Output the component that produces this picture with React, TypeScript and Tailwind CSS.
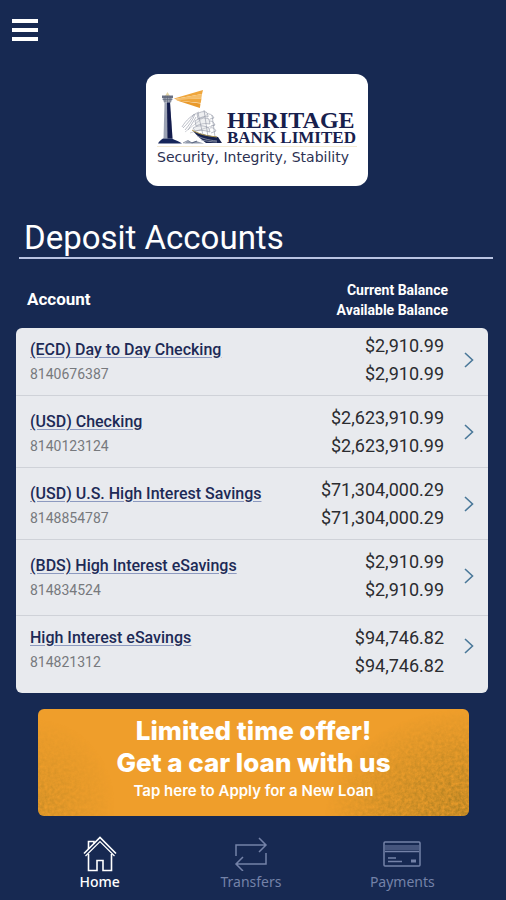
import React from "react";

type Account = {
  name: string;
  number: string;
  current: string;
  available: string;
};

const accounts: Account[] = [
  { name: "(ECD) Day to Day Checking", number: "8140676387", current: "$2,910.99", available: "$2,910.99" },
  { name: "(USD) Checking", number: "8140123124", current: "$2,623,910.99", available: "$2,623,910.99" },
  { name: "(USD) U.S. High Interest Savings", number: "8148854787", current: "$71,304,000.29", available: "$71,304,000.29" },
  { name: "(BDS) High Interest eSavings", number: "814834524", current: "$2,910.99", available: "$2,910.99" },
  { name: "High Interest eSavings", number: "814821312", current: "$94,746.82", available: "$94,746.82" },
];

const LogoMark = () => (
  <svg width="66" height="56" viewBox="0 0 66 56" fill="none" aria-hidden="true">
    {/* Light beams */}
    <path d="M17 8.500 46 0l-1 4-27 5z" fill="#efa63c" />
    <path d="m18 9 27-5-.6 4.500L19 9.600z" fill="#f5bd68" />
    <path d="m19 9.500 25.500-1-.8 4.500L20 10.500z" fill="#efa63c" />
    <path d="m20 10.500 23.500 3-.6 4.500z" fill="#e99a2c" />
    {/* Lighthouse */}
    <path d="m8 6 2.500-4L13 6z" fill="#e3d5a8" />
    <path d="M5 5.500h11V8H5z" fill="#6a7184" />
    <path d="M5.500 8h10l-1.500 4.500H7z" fill="#9aa0ae" />
    <path d="M5.500 9.500h10M8 6v6.500m2.500-6.500v6.500M13 6v6.500" stroke="#5b6377" strokeWidth=".6" />
    <path d="M7.500 12.500H13l2.500 36H6.500z" fill="#9ba2b4" />
    <path d="M10 12.500h3l2.500 36h-5z" fill="#131c4c" />
    <path d="M1 53.500c1-2.500 3-3.500 5-5h9c3 1.500 7 3 10 5z" fill="#17265a" />
    {/* Ship sails */}
    <g stroke="#8f94a2" strokeWidth=".6">
      <path d="M25 37c4-7 10-12 17-15M26 38c5-5 9-10 11-14M28 40c4-5 8-10 10-16M31 40c3-5 6-9 8-13" />
      <path d="M40 24c3-2 6-3 9-2 2 1 2 3 2 5-3-1-7 0-10 2zM38 31c4-3 9-4 14-2l1 5c-5-1-10 0-14 2zM36 38c5-3 11-3 16 0l1 4c-6-2-11-2-15-1z" fill="#eeeff1" />
      <path d="M52 24c2 0 4 2 5 4l-4 1M53 31c3 0 4 2 5 4l-4 1M53 38c3-1 5 1 6 3l-5 2M47 20l4 27M41 23l5 22M55 25l3 22" />
      <path d="M28 42l24-19M33 43l25-8" strokeWidth=".4" />
    </g>
    {/* Hull and water */}
    <path d="M36 41c7 3 17 5 25 6l4 6H49c-4-3-9-7-13-12z" fill="#17234e" />
    <path d="M35 40c8 5 17 6 25 7" stroke="#b29a52" strokeWidth="1" />
    <path d="M40 46c5 2 10 4 20 5M44 50c6 1 10 2 16 2" stroke="#a9afbd" strokeWidth=".7" />
    <path d="M27 53.500l4-2.500 3 1.500 5-1.500 8 2.500z" fill="#8e97a9" />
    <path d="M26 53l5-2.500 4 2.500 5-2" stroke="#34415f" strokeWidth=".6" />
  </svg>
);

const HomeIcon = () => (
  <svg width="34" height="36" viewBox="0 0 34 36" fill="none" stroke="currentColor" strokeWidth="1.6" aria-hidden="true">
    <path d="M1 17.500 17 1.500l16 16" />
    <path d="M2.500 20 17 5.500 31.500 20" strokeWidth="1.200" />
    <path d="M5.500 13V5.500H11V8" />
    <path d="M5.500 18v16.500H14V24.500h6v10h8.500V18" />
  </svg>
);

const TransfersIcon = () => (
  <svg width="34" height="34" viewBox="0 0 34 34" fill="none" stroke="currentColor" strokeWidth="1.500" aria-hidden="true">
    <path d="M2 19V8h30M25 1l7 7-7 7" />
    <path d="M32 16v11H2M9 20l-7 7 7 7" />
  </svg>
);

const PaymentsIcon = () => (
  <svg width="38" height="26" viewBox="0 0 38 26" fill="none" stroke="currentColor" strokeWidth="1.500" aria-hidden="true">
    <rect x="1" y="1" width="36" height="24" rx="1" />
    <path d="M2 4h34v5H2z" fill="currentColor" fillOpacity=".5" stroke="none" />
    <path d="M2 10.500h34" />
    <path d="M5 17h8M5 20.500h14" />
    <path d="M28 18.500h5v3h-5z" fill="currentColor" stroke="none" />
  </svg>
);

const ChevronIcon = () => (
  <svg width="10" height="16" viewBox="0 0 10 16" fill="none" stroke="#4a7899" strokeWidth="1.6" aria-hidden="true">
    <path d="m1 1 7.500 7L1 15" />
  </svg>
);

// Worn-paper speckle at the two ends of the promo banner
const BannerTexture = () => (
  <>
    <svg className="absolute top-0 right-0 h-full w-36" aria-hidden="true">
      <defs>
        <filter id="speckle" x="0" y="0" width="100%" height="100%" colorInterpolationFilters="sRGB">
          <feTurbulence type="fractalNoise" baseFrequency="0.3" numOctaves="4" seed="4" result="noise" />
          <feColorMatrix in="noise" type="matrix" values="0 0 0 0 0.6  0 0 0 0 0.46  0 0 0 0 0.12  1.3 0 0 0 -0.12" result="spots" />
          <feComposite in="spots" in2="SourceGraphic" operator="in" />
        </filter>
        <radialGradient id="right-fade" cx="1" cy="1" r="1">
          <stop offset="0" stopColor="#fff" stopOpacity=".85" />
          <stop offset=".6" stopColor="#fff" stopOpacity=".45" />
          <stop offset="1" stopColor="#fff" stopOpacity="0" />
        </radialGradient>
      </defs>
      <rect width="100%" height="100%" fill="url(#right-fade)" filter="url(#speckle)" />
    </svg>
    <svg className="absolute top-0 left-0 h-full w-24" aria-hidden="true">
      <defs>
        <radialGradient id="left-fade" cx="0" cy="0.9" r="0.8">
          <stop offset="0" stopColor="#fff" stopOpacity=".45" />
          <stop offset="1" stopColor="#fff" stopOpacity="0" />
        </radialGradient>
      </defs>
      <rect width="100%" height="100%" fill="url(#left-fade)" filter="url(#speckle)" />
    </svg>
  </>
);

const navItems = [
  { label: "Home", icon: HomeIcon, active: true },
  { label: "Transfers", icon: TransfersIcon, active: false },
  { label: "Payments", icon: PaymentsIcon, active: false },
];

const App = () => {
  return (
    <div className="min-h-screen bg-[#172952] font-['Roboto',sans-serif] text-white">
      <header className="px-3 pt-4">
        <button type="button" aria-label="Menu" className="flex h-7 w-[26px] flex-col justify-center gap-[5px]">
          <span className="h-1 w-full bg-white" />
          <span className="h-1 w-full bg-white" />
          <span className="h-1 w-full bg-white" />
        </button>
      </header>

      <div className="flex justify-center pt-[30px] pl-2">
        <div className="h-28 w-[222px] rounded-xl bg-white px-[11px] pt-4 text-[#17204d]">
          <div className="flex items-end border-b border-[#f3ead3]">
            <LogoMark />
            <div className="pl-1 font-['Liberation_Serif',serif] font-bold whitespace-nowrap">
              <div className="text-[24px] leading-[18px]">HERITAGE</div>
              <div className="text-[17px] leading-[17px]">BANK LIMITED</div>
            </div>
          </div>
          <p className="font-['DejaVu_Sans',sans-serif] text-[14px] leading-5 whitespace-nowrap text-[#2c3152]">
            Security, Integrity, Stability
          </p>
        </div>
      </div>

      <main>
        <h1 className="mr-[13px] ml-[19px] mt-8 border-b-2 border-[#b9c3e2] pl-[5px] text-[33px] leading-[39px]">
          Deposit Accounts
        </h1>

        <div className="mr-[18px] ml-4 pt-[21px]">
          <table className="w-full border-separate border-spacing-0">
            <thead>
              <tr>
                <th scope="col" className="pb-2 pl-[11px] text-left text-[17px] font-bold">
                  Account
                </th>
                <th scope="col" colSpan={2} className="pr-10 pb-2 text-right text-[14px] leading-5 font-bold">
                  Current Balance
                  <br />
                  Available Balance
                </th>
              </tr>
            </thead>
            <tbody>
              {accounts.map((account, i) => {
                const isFirst = i === 0;
                const isLast = i === accounts.length - 1;
                const spacing = isFirst
                  ? "pt-1 pb-[7px]"
                  : isLast
                    ? "pt-2 pb-[13px]"
                    : i === accounts.length - 2
                      ? "pt-2 pb-[11px]"
                      : "pt-2 pb-[7px]";
                const cell = `bg-[#e8eaee] align-top ${spacing} ${isLast ? "" : "border-b border-[#cfd2d8]"}`;

                return (
                  <tr key={account.number}>
                    <td className={`${cell} pl-[14px] ${isFirst ? "rounded-tl-md" : ""} ${isLast ? "rounded-bl-md" : ""}`}>
                      <div className={isLast ? "pt-0.5" : "pt-1.5"}>
                        <a href="#" className="block text-[16px] leading-6 font-medium whitespace-nowrap text-[#1d2a56] underline decoration-[#8d9ac0] underline-offset-2">
                          {account.name}
                        </a>
                        <div className="text-[14px] leading-6 text-[#77797d]">{account.number}</div>
                      </div>
                    </td>
                    <td className={`${cell} text-right text-[18px] leading-7 text-[#2b2c30]`}>
                      <div>{account.current}</div>
                      <div>{account.available}</div>
                    </td>
                    <td className={`${cell} w-11 ${isFirst ? "rounded-tr-md" : ""} ${isLast ? "rounded-br-md" : ""}`}>
                      <a
                        href="#"
                        aria-label={`Open ${account.name}`}
                        className={`flex items-center pl-5 ${isLast ? "h-11" : "h-14"}`}
                      >
                        <ChevronIcon />
                      </a>
                    </td>
                  </tr>
                );
              })}
            </tbody>
          </table>
        </div>

        <div className="mr-[37px] ml-[38px] pt-4">
          <button
            type="button"
            className="relative block w-full overflow-hidden rounded-md bg-[#ef9e2b] pt-1.5 pb-[13px] text-center font-['Inter',sans-serif]"
          >
            <BannerTexture />
            <span className="relative block text-[26px] leading-8 font-extrabold">Limited time offer!</span>
            <span className="relative block text-[26px] leading-8 font-extrabold">Get a car loan with us</span>
            <span className="relative block text-[15px] leading-6 font-semibold">Tap here to Apply for a New Loan</span>
          </button>
        </div>
      </main>

      <nav className="grid grid-cols-3 pt-5 pr-7 pl-6 font-['Noto_Sans',sans-serif]">
        {navItems.map((item) => {
          const Icon = item.icon;

          return (
            <a
              key={item.label}
              href="#"
              aria-current={item.active ? "page" : undefined}
              className={`flex flex-col items-center ${item.active ? "font-medium text-white" : "text-[#7482a8]"}`}
            >
              <span className="flex h-9 items-center">
                <Icon />
              </span>
              <span className="text-[14px] leading-5">{item.label}</span>
            </a>
          );
        })}
      </nav>
    </div>
  );
};

export default App;
